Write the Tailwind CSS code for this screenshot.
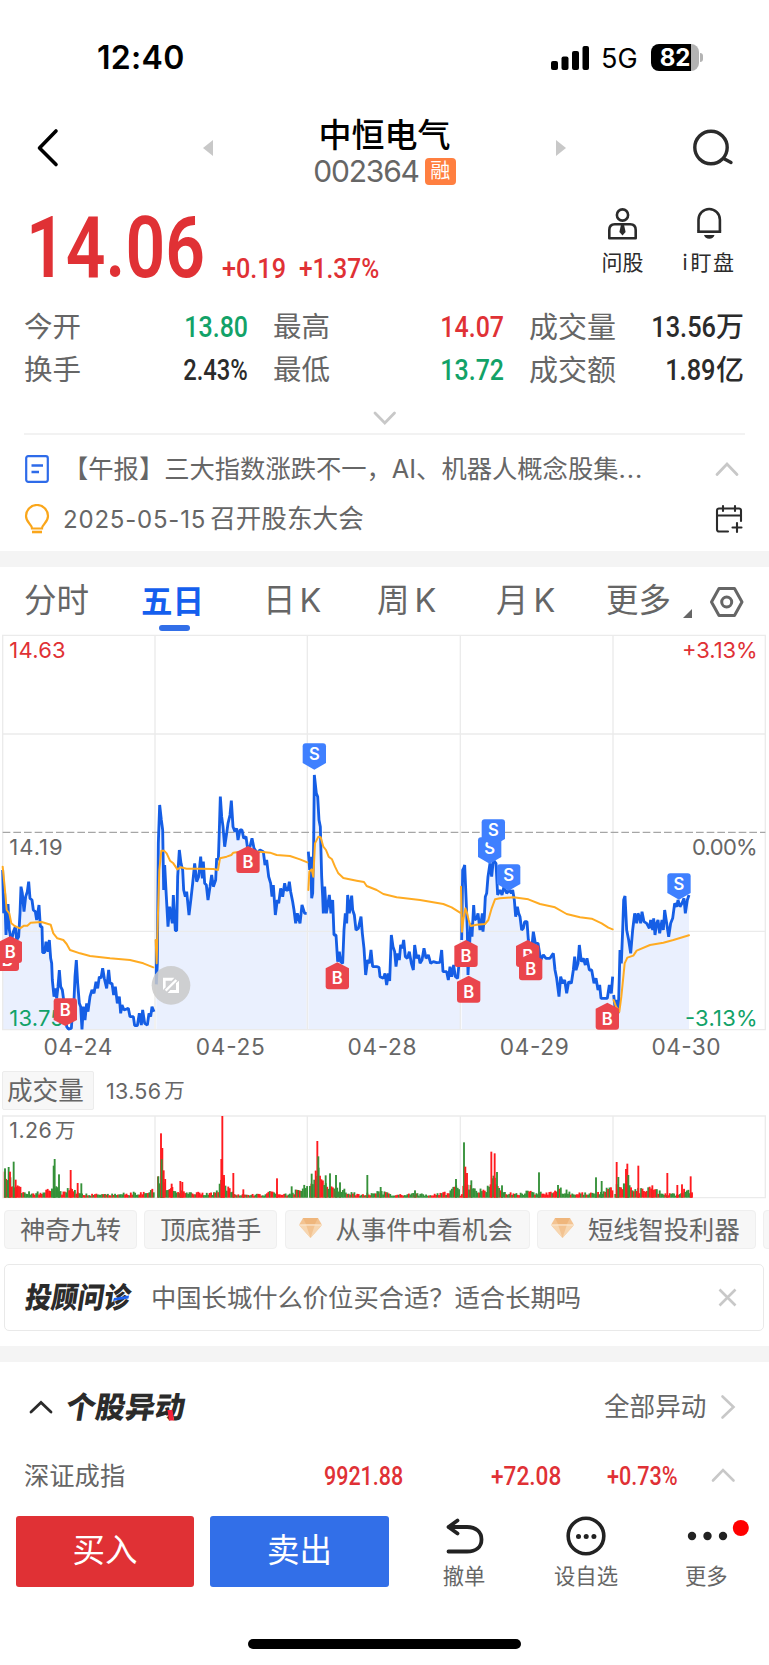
<!DOCTYPE html>
<html lang="zh-CN">
<head>
<meta charset="utf-8">
<title>中恒电气 002364</title>
<script src="https://cdn.jsdelivr.net/npm/@tailwindcss/browser@4"></script>
</head>
<body class="w-[769px] h-[1665px] bg-white overflow-hidden font-['Inter','Noto_Sans_CJK_SC',sans-serif] text-[#666] whitespace-nowrap">
<div class="flex flex-col w-[769px] h-[1665px]">

  <!-- status bar -->
  <div class="h-[115px] flex items-center justify-between pl-[97px] pr-[66px] leading-none text-black">
    <div class="text-[32px] font-semibold origin-left tracking-[0.3px]">12:40</div>
    <div class="flex items-center">
      <svg class="w-[38px] h-[24px]" viewBox="0 0 38 24"><rect x="0" y="15" width="7" height="9" rx="2"/><rect x="10.5" y="10.500" width="7" height="13.500" rx="2"/><rect x="21" y="5" width="7" height="19" rx="2"/><rect x="31.500" y="0" width="6.500" height="24" rx="2"/></svg>
      <div class="ml-[12px] mt-[2px] text-[27px] w-[40px]">5G</div>
      <div class="ml-[10px] relative w-[48px] h-[27px] rounded-[8px] bg-gradient-to-r from-black from-84% to-[#b3b3b3] to-84% flex items-center justify-center text-white text-[24px] font-bold">82</div>
      <div class="ml-[1px] w-[3px] h-[9px] rounded-r-full bg-[#b3b3b3]"></div>
    </div>
  </div>

  <!-- title bar -->
  <div class="h-[83px] flex items-start leading-none">
    <svg class="ml-[35px] mt-[12px] w-[24px] h-[42px] shrink-0" viewBox="0 0 24 42" fill="none" stroke="#000" stroke-width="3.6" stroke-linecap="round" stroke-linejoin="round"><path d="M21 4 4.500 21 21 37.500"/></svg>
    <svg class="ml-[144px] mt-[25px] w-[10px] h-[16px] shrink-0" viewBox="0 0 10 16"><path d="M10 0V16L0 8Z" fill="#c8c8c8"/></svg>
    <div class="w-[343px] flex flex-col items-center">
      <div class="h-[40px] text-[33px] font-medium text-black flex items-center">中恒电气</div>
      <div class="h-[32px] flex items-center gap-[6px]">
        <div class="text-[30px] tracking-[-1.200px]">002364</div>
        <div class="w-[31px] h-[27px] rounded-[4px] bg-[#ff7f40] text-white text-[20px] flex items-center justify-center">融</div>
      </div>
    </div>
    <svg class="mt-[25px] w-[10px] h-[16px] shrink-0" viewBox="0 0 10 16"><path d="M0 0V16L10 8Z" fill="#c8c8c8"/></svg>
    <svg class="ml-[125px] mt-[12px] w-[46px] h-[42px] shrink-0" viewBox="0 0 46 42" fill="none" stroke="#2b2b2b" stroke-width="3.400" stroke-linecap="round"><circle cx="20" cy="20.500" r="16.200"/><path d="M33.500 32 40 35.500"/></svg>
  </div>

  <!-- price -->
  <div class="h-[105px] flex items-start leading-none text-[#e03135]">
    <div class="ml-[26px] mt-[7px] w-[196px] h-[86px] text-[86px] font-['Roboto'] font-semibold origin-left"><div class="origin-left scale-x-[0.810]">14.06</div></div>
    <div class="mt-[57px] w-[77px] text-[28px] font-['Roboto'] font-medium"><div class="origin-left scale-x-[0.9]">+0.19</div></div>
    <div class="mt-[57px] w-[302px] text-[28px] font-['Roboto'] font-medium"><div class="origin-left scale-x-[0.875]">+1.37%</div></div>
    <div class="mt-[9px] w-[43px] flex flex-col items-center text-[#2b2b2b]">
      <svg class="w-[32px] h-[36px]" viewBox="0 0 32 36" fill="none" stroke="#2b2b2b" stroke-width="2.600"><circle cx="15.500" cy="8" r="5.600"/><path d="M2.300 31.200V23c0-3.500 2-5.800 5.500-5.800h15.400c3.500 0 5.500 2.300 5.500 5.800v8.200Z" stroke-linejoin="round"/><path d="M14 17.500h3l1.600 7.500-3.100 3.500L12.400 25Z" fill="#2b2b2b" stroke="none"/></svg>
      <div class="mt-[9px] text-[21px]">问股</div>
    </div>
    <div class="mt-[9px] ml-[37px] w-[56px] flex flex-col items-center text-[#2b2b2b]">
      <svg class="w-[32px] h-[36px]" viewBox="0 0 32 36" fill="none" stroke="#2b2b2b" stroke-width="2.600"><path d="M5.500 24.200V12.700a10.700 10.700 0 0 1 21.400 0V24.200" /><path d="M4.200 24.700h24"/><path d="M11 28h10.500c-.5 2.300-2.500 3.700-5.200 3.700s-4.800-1.400-5.300-3.700Z" fill="#2b2b2b" stroke="none"/></svg>
      <div class="mt-[9px] text-[21px] flex gap-[3px]">i<span class="tracking-[1.500px]">盯盘</span></div>
    </div>
  </div>

  <!-- quote figures -->
  <div class="h-[87px] pt-[3px] grid grid-cols-[224px_25px_231px_25px_215px] grid-rows-[43px_43px] pl-[24px] items-center text-[28.500px] leading-none">
    <div class="flex justify-between items-center"><span>今开</span><span class="font-['Roboto'] font-medium text-[29px] text-[#12a268] origin-right scale-x-[0.860]">13.80</span></div><div></div>
    <div class="flex justify-between items-center"><span>最高</span><span class="font-['Roboto'] font-medium text-[29px] text-[#e03135] origin-right scale-x-[0.860]">14.07</span></div><div></div>
    <div class="flex justify-between items-center"><span class="text-[29px]">成交量</span><span class="flex items-center justify-end font-['Roboto','Noto_Sans_CJK_SC'] font-medium text-[#2b2b2b]"><span class="text-[29px] origin-right scale-x-[0.875]">13.56</span><span class="text-[28px]">万</span></span></div>
    <div class="flex justify-between items-center"><span>换手</span><span class="font-['Roboto'] font-medium text-[29px] text-[#2b2b2b] origin-right scale-x-[0.820]">2.43%</span></div><div></div>
    <div class="flex justify-between items-center"><span>最低</span><span class="font-['Roboto'] font-medium text-[29px] text-[#12a268] origin-right scale-x-[0.860]">13.72</span></div><div></div>
    <div class="flex justify-between items-center"><span class="text-[29px]">成交额</span><span class="flex items-center justify-end font-['Roboto','Noto_Sans_CJK_SC'] font-medium text-[#2b2b2b]"><span class="text-[29px] origin-right scale-x-[0.875]">1.89</span><span class="text-[28px]">亿</span></span></div>
  </div>

  <div class="h-[45px] mx-[24px] border-b-2 border-[#f2f2f2] flex justify-center">
    <svg class="mt-[19px] w-[26px] h-[18px]" viewBox="0 0 26 18" fill="none" stroke="#c8c8c8" stroke-width="2.800" stroke-linecap="round"><path d="m3 4 9.800 10L22.500 4"/></svg>
  </div>

  <!-- notices -->
  <div class="h-[116px] pl-[24px] flex flex-col text-[25.300px] leading-none">
    <div class="h-[67px] flex items-center">
      <svg class="w-[26px] h-[30px]" viewBox="0 0 26 30" fill="none" stroke="#2e6be9" stroke-width="2.200"><rect x="2.200" y="2.200" width="21.600" height="25.600" rx="2"/><path d="M7.500 11.500h11.500M7.500 18h7.500" stroke-width="2.400"/></svg>
      <div class="ml-[13px] w-[652px]">【午报】三大指数涨跌不一，AI、机器人概念股集<span class="tracking-[1px]">...</span></div>
      <svg class="w-[26px] h-[18px]" viewBox="0 0 26 18" fill="none" stroke="#c8c8c8" stroke-width="2.800" stroke-linecap="round"><path d="M2 14.500 12 4 22 14.500"/></svg>
    </div>
    <div class="h-[34px] flex items-center">
      <svg class="w-[26px] h-[30px]" viewBox="0 0 26 30" fill="none" stroke="#faa61a" stroke-width="2.200"><path d="M8 24.500c0-4.500-6-5.500-6-12.500a11 11 0 0 1 22 0c0 7-6 8-6 12.500Z"/><path d="M8 28h10" stroke-width="2.600"/></svg>
      <div class="ml-[13px] w-[651px]"><span class="text-[24px] tracking-[0.800px]">2025-05-15</span><span class="ml-[4px] text-[25.600px]">召开股东大会</span></div>
      <svg class="w-[30px] h-[30px]" viewBox="0 0 30 30" fill="none" stroke="#2b2b2b" stroke-width="2.100" stroke-linecap="round"><path d="M14 27.500H5a2 2 0 0 1-2-2V6.500a2 2 0 0 1 2-2h20a2 2 0 0 1 2 2V17M3 11.500h24M9 2v5M21 2v5M23 19v9M18.500 23.500h9"/></svg>
    </div>
  </div>
  <div class="h-[16px] bg-[#f4f4f4]"></div>

  <!-- period tabs -->
  <div class="relative h-[63px] pt-[6px] pl-[24px] flex items-center text-[32.500px] leading-none">
    <div class="w-[117px]">分时</div>
    <div class="w-[122px] text-[#155fee] font-bold text-[31.500px]">五日</div>
    <div class="w-[114px] flex gap-[4px]">日<span>K</span></div>
    <div class="w-[119px] flex gap-[5px]">周<span>K</span></div>
    <div class="w-[110px] flex gap-[5px]">月<span>K</span></div>
    <div class="w-[77px]">更多</div>
    <svg class="mt-[23px] w-[9px] h-[9px]" viewBox="0 0 9 9"><path d="M9 0V9H0Z" fill="#666"/></svg>
    <svg class="ml-[17px] w-[36px] h-[34px]" viewBox="0 0 36 34" fill="none" stroke="#666" stroke-width="3" stroke-linejoin="round"><path d="M10 3.500h15.500L33 17l-7.500 13.500H10L2.500 17Z"/><circle cx="17.700" cy="17" r="5"/></svg>
    <div class="absolute left-[159px] top-[58px] w-[31px] h-[6px] rounded-full bg-[#326fe8] z-10"></div>
  </div>

  <!-- five-day price chart, three units per pixel -->
  <svg class="w-[769px] h-[430px] shrink-0" viewBox="0 0 2307 1290">
    <defs>
      <g id="buy"><path d="M0 0 35 18V72q0 9-9 9H-26q-9 0-9-9V18Z" fill="#ea454c"/><text x="0" y="66" font-size="50" font-weight="600" text-anchor="middle" fill="#fff">B</text></g>
      <g id="sell"><path d="M0 0 35-20V-70q0-9-9-9H-26q-9 0-9 9V-20Z" fill="#3f80ff"/><text x="0" y="-29" font-size="50" font-weight="600" text-anchor="middle" fill="#fff">S</text></g>
    </defs>
    <g id="area" fill="#eaf0fe"></g>
    <g fill="none" stroke="#ebebeb" stroke-width="4"><path d="M8 16H2296V1199H8ZM8 312H2296M8 904H2296M465 16V1199M922 16V1199M1381 16V1199M1839 16V1199"/></g>
    <path d="M8 607H2296" stroke="#a6a6a6" stroke-width="4" stroke-dasharray="23 9"/>
    <g id="price" fill="none" stroke="#155ee5" stroke-width="8.500" stroke-linejoin="bevel"></g>
    <g id="average" fill="none" stroke="#ffab22" stroke-width="6" stroke-linejoin="round" stroke-linecap="round"></g>
    <g font-size="66" fill="#666">
      <text x="28" y="83" fill="#e03135" textLength="169">14.63</text>
      <text x="28" y="675" textLength="160">14.19</text>
      <text x="28" y="1188" fill="#12a268" textLength="163">13.75</text>
      <text x="2046" y="83" fill="#e03135" textLength="227">+3.13%</text>
      <text x="2076" y="675" textLength="197">0.00%</text>
      <text x="2055" y="1188" fill="#12a268" textLength="218">-3.13%</text>
    </g>
    <g font-size="68" fill="#666" text-anchor="middle">
      <text x="234" y="1276" textLength="207">04-24</text><text x="691" y="1276" textLength="207">04-25</text><text x="1146" y="1276" textLength="207">04-28</text><text x="1603" y="1276" textLength="207">04-29</text><text x="2058" y="1276" textLength="207">04-30</text>
    </g>
    <use href="#buy" x="22" y="942"/><use href="#buy" x="31" y="918"/>
    <g><path d="M196 1188 231 1170V1114q0-9-9-9H170q-9 0-9 9V1170Z" fill="#ea454c"/><text x="196" y="1157" font-size="50" font-weight="600" text-anchor="middle" fill="#fff">B</text></g>
    <use href="#buy" x="744" y="648"/><use href="#buy" x="1012" y="997"/><use href="#buy" x="1398" y="930"/><use href="#buy" x="1406" y="1037"/>
    <use href="#buy" x="1583" y="930"/><use href="#buy" x="1592" y="970"/><use href="#buy" x="1822" y="1118"/>
    <use href="#sell" x="943" y="419"/><use href="#sell" x="1469" y="701"/><use href="#sell" x="1480" y="647"/><use href="#sell" x="1526" y="782"/><use href="#sell" x="2037" y="809"/>
    <circle cx="513" cy="1066" r="58" fill="#c9c9c9" fill-opacity=".85"/>
    <path d="M489 1043H523L515 1052H497V1072L489 1080ZM537 1089H503L511 1080H528V1060L537 1052Z" fill="#fff"/>
    <path d="M497 1082 529 1050" stroke="#fff" stroke-width="7"/>
  </svg>

  <!-- volume header -->
  <div class="h-[50px] pt-[11px] pl-[2px] flex items-start leading-none">
    <div class="w-[92px] h-[39px] border border-[#ececec] bg-[#f7f7f7] rounded-[2px] flex items-center pl-[4px] text-[25.600px]">成交量</div>
    <div class="ml-[12px] h-[41px] flex items-center text-[21.500px] tracking-[0.300px]">13.56<span class="ml-[3px] text-[20.500px]">万</span></div>
  </div>
  <svg class="w-[769px] h-[90px] shrink-0" viewBox="0 150 2307 270">
    <path d="M8 168H2296V413H8ZM465 168V413M922 168V413M1381 168V413M1839 168V413" fill="none" stroke="#ebebeb" stroke-width="4"/>
    <g id="volume"></g>
    <text x="28" y="235" font-size="64" fill="#666" textLength="127">1.26</text><text x="165" y="235" font-size="61" fill="#666">万</text>
  </svg>

  <!-- tool chips -->
  <div class="h-[59px] pt-[10px] pl-[4px] flex gap-[7.300px] overflow-hidden leading-none text-[25.300px]">
    <div class="w-[133px] h-[39px] shrink-0 border border-[#efefef] bg-[#f7f7f7] rounded-[4px] flex items-center justify-center">神奇九转</div>
    <div class="w-[133px] h-[39px] shrink-0 border border-[#efefef] bg-[#f7f7f7] rounded-[4px] flex items-center justify-center">顶底猎手</div>
    <div class="w-[245px] h-[39px] shrink-0 border border-[#efefef] bg-[#f7f7f7] rounded-[4px] flex items-center pl-[12px]">
      <svg class="w-[25px] h-[22px] mb-[3px]" viewBox="0 0 25 22"><path d="M5 1H20L24 8 12.500 21 1 8Z" fill="#f3c391"/><path d="M5 1H20L17 7H8Z" fill="#efb67c"/><path d="M1 8 8 7.500 12.500 21ZM24 8 17 7.500 12.500 21Z" fill="#f7d6b0"/><path d="M1 8H24" stroke="#fbe6cf" stroke-width="1.200"/></svg>
      <span class="ml-[13px]">从事件中看机会</span></div>
    <div class="w-[219px] h-[39px] shrink-0 border border-[#efefef] bg-[#f7f7f7] rounded-[4px] flex items-center pl-[12px]">
      <svg class="w-[25px] h-[22px] mb-[3px]" viewBox="0 0 25 22"><path d="M5 1H20L24 8 12.500 21 1 8Z" fill="#f3c391"/><path d="M5 1H20L17 7H8Z" fill="#efb67c"/><path d="M1 8 8 7.500 12.500 21ZM24 8 17 7.500 12.500 21Z" fill="#f7d6b0"/><path d="M1 8H24" stroke="#fbe6cf" stroke-width="1.200"/></svg>
      <span class="ml-[13px]">短线智投利器</span></div>
    <div class="w-[133px] h-[39px] shrink-0 border border-[#efefef] bg-[#f7f7f7] rounded-[4px]"></div>
  </div>

  <!-- advisor question -->
  <div class="h-[87px] pt-[5px] pl-[4px] pr-[5px] leading-none">
    <div class="h-[67px] border border-[#e9e9e9] rounded-[5px] flex items-center pl-[16px]">
      <svg class="w-[118px] h-[44px] overflow-visible" viewBox="0 0 118 44"><g transform="translate(6 0) skewX(-9)"><text x="2" y="32" font-size="29" font-weight="900" textLength="105" lengthAdjust="spacingAndGlyphs" fill="#2b2b2b">投顾问诊</text></g><path d="M93 22 108 19.500 107.500 22.500 92 25Z" fill="#1e62f0"/></svg>
      <div class="ml-[12px] w-[567px] text-[25.300px]">中国长城什么价位买合适？适合长期吗</div>
      <svg class="w-[19px] h-[19px]" viewBox="0 0 19 19" stroke="#c8c8c8" stroke-width="2.600"><path d="m1.500 1.500 16 16M17.500 1.500l-16 16"/></svg>
    </div>
  </div>
  <div class="h-[16px] bg-[#f4f4f4]"></div>

  <!-- stock movements -->
  <div class="h-[90px] flex items-center leading-none">
    <svg class="ml-[28px] w-[26px] h-[18px]" viewBox="0 0 26 18" fill="none" stroke="#2b2b2b" stroke-width="2.800" stroke-linecap="round"><path d="M3 14 13 4.500 23 14"/></svg>
    <svg class="ml-[7px] w-[134px] h-[46px] overflow-visible" viewBox="0 0 134 46"><g transform="translate(6 0) skewX(-9)"><text x="3" y="34.500" font-size="30" font-weight="900" textLength="119" lengthAdjust="spacingAndGlyphs" fill="#2b2b2b">个股异动</text></g><path d="M106.500 26h5l1.500 10.500h-5Z" fill="#f5203a"/></svg>
    <div class="ml-[409px] w-[116px] text-[25.600px]">全部异动</div>
    <svg class="w-[16px] h-[26px]" viewBox="0 0 16 26" fill="none" stroke="#c8c8c8" stroke-width="2.600" stroke-linecap="round"><path d="M2.500 2.500 13.500 13 2.500 23.500"/></svg>
  </div>

  <!-- index row -->
  <div class="h-[48px] flex items-center pl-[24px] leading-none">
    <div class="w-[300px] text-[25.300px]">深证成指</div>
    <div class="w-[167px] font-['Roboto'] font-medium text-[26px] text-[#e03135]"><div class="origin-left scale-x-[0.825]">9921.88</div></div>
    <div class="w-[116px] font-['Roboto'] font-medium text-[26px] text-[#e03135]"><div class="origin-left scale-x-[0.870]">+72.08</div></div>
    <div class="w-[103px] font-['Roboto'] font-medium text-[26px] text-[#e03135]"><div class="origin-left scale-x-[0.830]">+0.73%</div></div>
    <svg class="w-[26px] h-[18px]" viewBox="0 0 26 18" fill="none" stroke="#c8c8c8" stroke-width="2.600" stroke-linecap="round"><path d="M3 13.500 13 3 23.500 13.500"/></svg>
  </div>

  <!-- action bar -->
  <div class="h-[139px] pt-[16px] flex items-start leading-none">
    <div class="ml-[16px] w-[178px] h-[71px] rounded-[3px] bg-[#e03135] text-white text-[32.500px] flex items-center justify-center">买入</div>
    <div class="ml-[16px] w-[179px] h-[71px] rounded-[3px] bg-[#326fe8] text-white text-[32.500px] flex items-center justify-center">卖出</div>
    <div class="ml-[53px] w-[44px] flex flex-col items-center text-[21.300px]">
      <svg class="w-[42px] h-[40px]" viewBox="0 0 42 40" fill="none" stroke="#222" stroke-width="3.800" stroke-linecap="round" stroke-linejoin="round"><path d="M14.500 4.500 5.500 11l9 6.500M5.500 11H24c9 0 14.500 5 14.500 12.500S33 35.500 24 35.500H5.500"/></svg>
      <div class="mt-[10px]">撤单</div>
    </div>
    <div class="ml-[67px] w-[66px] flex flex-col items-center text-[21.300px]">
      <svg class="w-[42px] h-[40px]" viewBox="0 0 42 40"><circle cx="21" cy="20" r="17.800" fill="none" stroke="#222" stroke-width="3.600"/><circle cx="13.500" cy="20.500" r="2.500" fill="#222"/><circle cx="21.200" cy="20.500" r="2.500" fill="#222"/><circle cx="28.900" cy="20.500" r="2.500" fill="#222"/></svg>
      <div class="mt-[10px]">设自选</div>
    </div>
    <div class="ml-[66px] w-[66px] flex flex-col text-[21.300px]">
      <svg class="w-[66px] h-[40px]" viewBox="0 0 66 40" fill="#222"><circle cx="7" cy="20" r="4.200"/><circle cx="22.500" cy="20" r="4.200"/><circle cx="38" cy="20" r="4.200"/><circle cx="55.800" cy="12" r="8" fill="#ff0000"/></svg>
      <div class="mt-[10px]">更多</div>
    </div>
  </div>
  <div class="h-[10px] ml-[248px] w-[273px] rounded-full bg-black shrink-0"></div>
</div>

<script>
const price = [
"8,720 11,850 14,790 18,915 24,822 28,900 34,935 40,905 46,890 50,930 56,920 60,850 63,770 67,790 72,845 77,800 82,785 86,755 90,805 96,810 100,840 106,845 110,870 117,825 121,890 126,890 128,968 134,968 138,935 144,965 148,930 152,985 155,1000 157,1050 162,1100 166,1075 170,1105 174,1070 178,1020 182,1070 187,1080 191,1110 196,1150 200,1190 205,1197 214,1195 218,1140 222,1110 225,1040 229,990 233,1060 238,1120 242,1130 246,1198 250,1130 255,1170 260,1120 264,1145 270,1100 276,1080 282,1090 288,1055 293,1075 298,1040 303,1045 308,1015 313,1045 320,1075 326,1020 330,1060 336,1060 341,1095 346,1070 352,1120 358,1100 362,1150 366,1125 372,1140 385,1135 390,1160 400,1160 404,1187 412,1187 418,1150 424,1185 428,1140 434,1180 442,1185 447,1150 452,1160 456,1130 462,1145",
"469,930 469,1063 472,1000 475,640 479,525 484,570 488,600 491,780 494,705 499,800 504,890 509,830 512,850 517,880 520,795 526,902 530,902 533,740 538,660 543,700 548,720 551,780 556,800 560,785 567,855 573,805 578,760 584,700 590,755 596,740 602,680 607,745 610,695 614,760 619,765 624,810 630,770 635,735 640,770 647,750 650,685 655,690 658,600 661,500 665,560 669,590 674,650 680,610 684,580 690,555 694,512 699,590 705,605 710,595 714,630 720,600 726,600 731,625 738,620 742,650 750,650 756,625 762,655 772,670 780,660 790,665 795,705 800,690 806,740 812,760 816,800 820,765 826,855 832,810 836,820 842,775 848,800 854,760 858,780 864,780 868,755 872,785 878,815 882,840 887,880 892,850 900,880 906,825 914,850 920,850",
"925,665 929,720 932,680 935,805 938,790 941,640 943,435 949,490 953,500 957,570 961,590 965,740 968,800 970,850 974,770 979,850 984,820 988,795 993,850 998,810 1002,915 1008,915 1013,995 1018,965 1022,995 1028,1000 1032,900 1036,850 1040,880 1043,795 1048,850 1055,797 1058,840 1063,855 1068,900 1075,895 1083,860 1087,910 1092,955 1097,1035 1103,990 1108,1000 1113,960 1118,1010 1130,1010 1137,1012 1140,1040 1150,1045 1155,1030 1160,1065 1165,1030 1169,1053 1174,915 1179,950 1184,965 1188,1010 1193,970 1198,990 1202,945 1207,955 1211,930 1216,980 1222,985 1228,965 1234,1000 1240,1020 1244,945 1250,985 1256,975 1260,1000 1266,990 1272,955 1278,985 1285,975 1292,1000 1300,995 1310,998 1320,997 1325,960 1329,1025 1340,1025 1345,1050 1350,1010 1355,1040 1361,1005 1366,1040 1373,1045 1377,1000 1381,960",
"1385,930 1388,720 1391,715 1394,705 1398,800 1402,900 1404,1035 1408,960 1412,880 1416,920 1421,825 1424,870 1430,865 1434,850 1440,900 1447,850 1449,905 1453,860 1456,800 1460,790 1464,740 1470,700 1475,740 1480,690 1488,700 1493,795 1500,780 1506,795 1512,770 1520,790 1528,780 1534,790 1538,780 1543,810 1547,860 1552,830 1556,850 1560,860 1565,900 1570,895 1574,875 1581,875 1585,930 1592,990 1600,905 1606,940 1614,940 1622,990 1630,975 1638,985 1650,985 1660,970 1665,1020 1670,1045 1677,1100 1682,1040 1688,1060 1694,1050 1700,1090 1706,1055 1714,1060 1720,1020 1724,980 1728,1020 1734,1000 1738,945 1744,995 1750,985 1756,1005 1761,985 1768,1020 1775,1020 1782,1060 1788,1045 1794,1080 1799,1065 1803,1105 1812,1105 1822,1105 1828,1065 1834,1090 1838,1040",
"1841,1095 1846,1140 1850,1110 1855,1150 1860,960 1864,1000 1868,900 1871,810 1875,798 1880,900 1886,930 1892,970 1898,900 1904,850 1910,880 1914,850 1918,860 1922,880 1926,845 1932,875 1940,880 1948,895 1952,870 1958,900 1961,865 1965,915 1970,880 1974,870 1979,910 1986,870 1990,900 1994,840 2000,880 2006,920 2012,880 2018,865 2024,820 2030,830 2034,810 2040,830 2046,820 2052,805 2056,850 2062,810 2067,795"];
const average = [
"8,710 14,770 20,840 28,850 34,880 44,888 60,895 72,887 82,887 92,878 125,876 152,884 160,910 172,925 190,930 200,942 210,960 240,970 270,978 330,985 390,990 430,1000 460,1012",
"467,930 470,1000 474,850 478,720 484,662 492,662 500,670 510,692 520,700 532,718 542,712 560,716 600,716 640,717 654,720 660,685 680,680 694,675 700,668 720,665 780,665 810,668 830,675 870,678 900,688 922,697",
"925,780 928,725 935,718 940,740 945,640 955,620 962,622 970,650 978,660 986,680 996,688 1005,710 1015,730 1030,744 1070,752 1092,756 1100,768 1130,780 1150,792 1190,802 1260,810 1330,822 1355,832 1380,848",
"1383,770 1386,905 1390,870 1396,835 1400,845 1406,870 1412,888 1430,884 1455,882 1465,870 1475,835 1485,808 1500,805 1540,802 1585,808 1620,822 1665,832 1700,852 1740,862 1775,866 1805,880 1825,893 1838,898",
"1841,1110 1848,1130 1858,1145 1864,1100 1868,1060 1874,1000 1882,983 1900,977 1910,962 1950,945 1990,938 2020,930 2067,916"];
const put = (id, s) => { document.getElementById(id).innerHTML = s; };
put('price', price.map(p => `<polyline points="${p}"/>`).join(''));
put('average', average.map(p => `<polyline points="${p}"/>`).join(''));
put('area', price.map(p => {
  const a = p.split(' '), x0 = a[0].split(',')[0], x1 = a[a.length - 1].split(',')[0];
  return `<polygon points="${x0},1199 ${p} ${x1},1199"/>`;
}).join(''));

// typical bar height along the axis, then the single tall bars: [x, height, red?]
const level = [[12,75],[30,55],[45,35],[70,22],[90,14],[130,16],[155,27],[175,32],[185,16],[205,24],[240,16],[262,10],[330,9],[380,12],[440,16],[460,28],[466,0],[471,0],[473,45],[490,75],[500,38],[520,22],[550,22],[565,13],[590,14],[640,12],[655,20],[665,70],[680,28],[705,11],[790,9],[815,18],[830,14],[865,10],[900,26],[920,37],[925,0],[928,0],[932,60],[955,70],[970,35],[1000,30],[1040,18],[1080,9],[1110,13],[1145,18],[1160,12],[1200,8],[1240,11],[1280,9],[1330,13],[1350,16],[1375,38],[1382,0],[1385,0],[1389,45],[1410,40],[1430,20],[1460,28],[1480,60],[1495,40],[1510,14],[1550,11],[1590,18],[1640,12],[1675,25],[1715,14],[1770,12],[1815,22],[1836,32],[1840,0],[1844,0],[1848,40],[1880,40],[1895,22],[1960,26],[1990,13],[2030,10],[2050,25],[2072,16],[2078,0]];
const tall = [[15,88,0],[26,92,0],[30,78,1],[41,108,0],[47,54,1],[161,96,0],[164,116,0],[177,70,0],[212,83,1],[233,44,1],[244,43,0],[475,64,0],[483,193,1],[487,149,1],[485,115,0],[491,82,1],[515,42,1],[541,50,1],[547,47,1],[664,116,1],[667,245,1],[672,60,1],[700,74,1],[730,25,1],[831,58,1],[875,34,0],[935,72,0],[952,170,1],[955,124,0],[977,67,0],[990,73,0],[1008,68,0],[1020,46,0],[1102,68,0],[1142,32,0],[1245,22,0],[1368,56,0],[1392,166,0],[1396,93,1],[1401,74,1],[1414,52,0],[1474,138,1],[1484,133,1],[1491,77,0],[1506,37,0],[1617,76,0],[1674,38,0],[1788,61,0],[1805,50,0],[1850,107,1],[1855,62,0],[1878,86,1],[1882,102,1],[1885,68,0],[1915,96,1],[1957,37,1],[2002,74,1],[2032,38,1],[2046,40,1],[2072,64,1],[2076,16,1]];
let seed = 11;
const rnd = () => (seed = (Math.imul(seed, 1103515245) + 12345) & 0x7fffffff) / 0x7fffffff;
const bar = (x, h, red) => `<rect x="${x - 2.8}" y="${413 - h}" width="5.600" height="${h}" fill="${red ? '#ff1a1e' : '#359139'}"/>`;
let bars = '', k = 0;
for (let x = 14; x < 2076; x += 4.3) {
  while (k < level.length - 2 && level[k + 1][0] < x) k++;
  const [a, ya] = level[k], [b, yb] = level[k + 1];
  const base = ya + (yb - ya) * (x - a) / (b - a);
  const r = rnd(), c = rnd();
  if (base > 3) bars += bar(x, Math.max(6, base * (.55 + r * .8)), c < .42);
}
put('volume', bars + tall.map(t => bar(...t)).join(''));
</script>
</body>
</html>
